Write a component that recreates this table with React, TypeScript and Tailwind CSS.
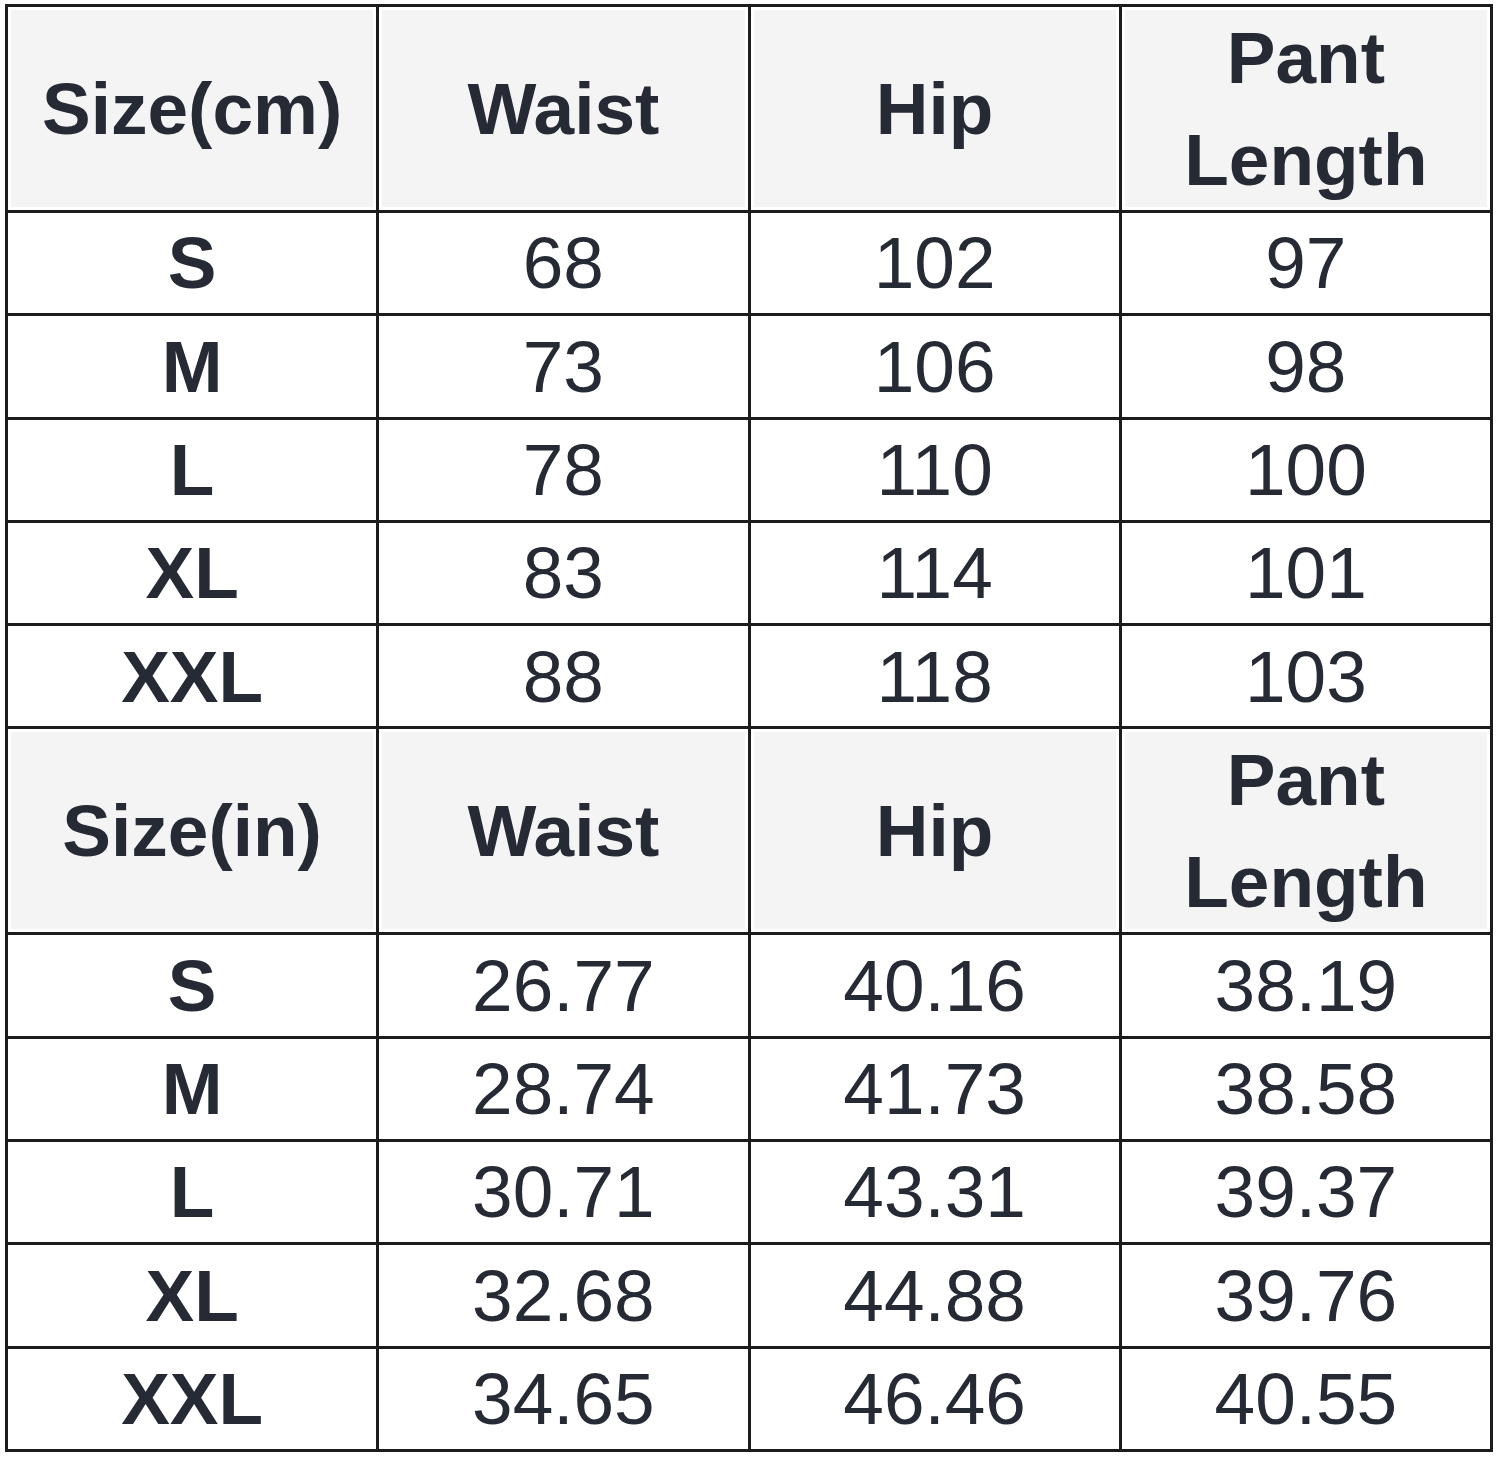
const cmRows = [
  ["S", "68", "102", "97"],
  ["M", "73", "106", "98"],
  ["L", "78", "110", "100"],
  ["XL", "83", "114", "101"],
  ["XXL", "88", "118", "103"],
];

const inRows = [
  ["S", "26.77", "40.16", "38.19"],
  ["M", "28.74", "41.73", "38.58"],
  ["L", "30.71", "43.31", "39.37"],
  ["XL", "32.68", "44.88", "39.76"],
  ["XXL", "34.65", "46.46", "40.55"],
];

function HeaderRow({ unit }: { unit: string }) {
  const cells = [unit, "Waist", "Hip", "Pant Length"];
  return (
    <>
      {cells.map((c) => (
        <div
          key={c}
          className="h-[206px] flex items-center justify-center text-center border-r-[3px] border-b-[3px] border-[#1c1c1c] bg-[#f4f4f4] shadow-[inset_0_0_0_3px_#ffffff] font-bold leading-[102px] px-6"
        >
          {c}
        </div>
      ))}
    </>
  );
}

function DataRow({ row }: { row: string[] }) {
  return (
    <>
      {row.map((c, i) => (
        <div
          key={i}
          className={
            "h-[103.3px] flex items-center justify-center border-r-[3px] border-b-[3px] border-[#1c1c1c] bg-white " +
            (i === 0 ? "font-bold" : "font-normal")
          }
        >
          {c}
        </div>
      ))}
    </>
  );
}

export default function App() {
  return (
    <div className="w-[1500px] h-[1459px] bg-white pt-[4px] pl-[5px]">
      <div
        className="w-[1488px] grid grid-cols-4 border-l-[3px] border-t-[3px] border-[#1c1c1c] text-[73px] text-[#262a35]"
        style={{ fontFamily: '"Liberation Sans", Arial, sans-serif' }}
      >
        <HeaderRow unit="Size(cm)" />
        {cmRows.map((r) => (
          <DataRow key={"cm" + r[0]} row={r} />
        ))}
        <HeaderRow unit="Size(in)" />
        {inRows.map((r) => (
          <DataRow key={"in" + r[0]} row={r} />
        ))}
      </div>
    </div>
  );
}
